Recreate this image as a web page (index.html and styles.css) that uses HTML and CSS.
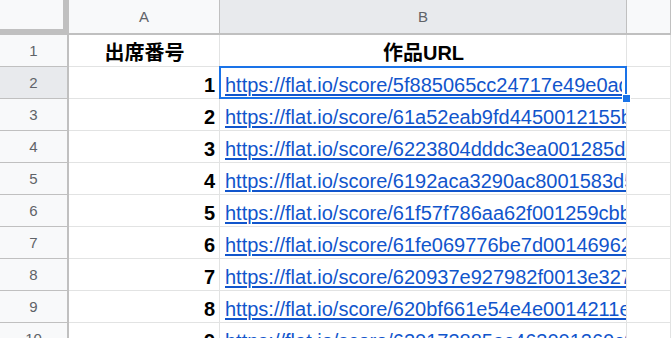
FILE: index.html
```html
<!DOCTYPE html>
<html lang="ja">
<head>
    <meta charset="UTF-8">
    <title>Sheet</title>
    <link rel="stylesheet" href="styles.css">
</head>
<body>

<div class="sheet">
    <div class="row head-row">
        <div class="cell corner"></div>
        <div class="cell col-a col-head">A</div>
        <div class="cell col-b col-head active">B</div>
        <div class="cell col-c col-head"></div>
    </div>

    <div class="row">
        <div class="cell row-head">1</div>
        <div class="cell col-a title">出席番号</div>
        <div class="cell col-b title">作品URL</div>
        <div class="cell col-c"></div>
    </div>
    <div class="row">
        <div class="cell row-head active">2</div>
        <div class="cell col-a num">1</div>
        <div class="cell col-b selected"><a href="#">https://flat.io/score/5f885065cc24717e49e0adf3</a><span class="handle"></span></div>
        <div class="cell col-c"></div>
    </div>
    <div class="row">
        <div class="cell row-head">3</div>
        <div class="cell col-a num">2</div>
        <div class="cell col-b"><a href="#">https://flat.io/score/61a52eab9fd4450012155b9c</a></div>
        <div class="cell col-c"></div>
    </div>
    <div class="row">
        <div class="cell row-head">4</div>
        <div class="cell col-a num">3</div>
        <div class="cell col-b"><a href="#">https://flat.io/score/6223804dddc3ea001285d0a1</a></div>
        <div class="cell col-c"></div>
    </div>
    <div class="row">
        <div class="cell row-head">5</div>
        <div class="cell col-a num">4</div>
        <div class="cell col-b"><a href="#">https://flat.io/score/6192aca3290ac8001583d5e2</a></div>
        <div class="cell col-c"></div>
    </div>
    <div class="row">
        <div class="cell row-head">6</div>
        <div class="cell col-a num">5</div>
        <div class="cell col-b"><a href="#">https://flat.io/score/61f57f786aa62f001259cbb4</a></div>
        <div class="cell col-c"></div>
    </div>
    <div class="row">
        <div class="cell row-head">7</div>
        <div class="cell col-a num">6</div>
        <div class="cell col-b"><a href="#">https://flat.io/score/61fe069776be7d0014696201</a></div>
        <div class="cell col-c"></div>
    </div>
    <div class="row">
        <div class="cell row-head">8</div>
        <div class="cell col-a num">7</div>
        <div class="cell col-b"><a href="#">https://flat.io/score/620937e927982f0013e32755</a></div>
        <div class="cell col-c"></div>
    </div>
    <div class="row">
        <div class="cell row-head">9</div>
        <div class="cell col-a num">8</div>
        <div class="cell col-b"><a href="#">https://flat.io/score/620bf661e54e4e0014211e3d</a></div>
        <div class="cell col-c"></div>
    </div>
    <div class="row">
        <div class="cell row-head">10</div>
        <div class="cell col-a num">9</div>
        <div class="cell col-b"><a href="#">https://flat.io/score/620173885ac463001260c9a7</a></div>
        <div class="cell col-c"></div>
    </div>
</div>

</body>
</html>
```

FILE: styles.css
```css
body {
    margin: 0;
    background: #fff;
    overflow: hidden;
    font-family: "Liberation Sans", Arial, "Noto Sans CJK JP", sans-serif;
}
.sheet {
    width: 100%;
}
.row {
    display: flex;
    height: 32px;
}
.head-row {
    height: 35px;
}
.cell {
    box-sizing: border-box;
    flex: none;
    height: 100%;
    border-right: 1px solid #e2e3e3;
    border-bottom: 1px solid #e2e3e3;
    white-space: nowrap;
    overflow: hidden;
    display: flex;
    align-items: flex-end;
    padding: 0 4px 1px 5px;
    font-size: 20px;
    line-height: 24px;
    color: #000;
}
.col-a {
    width: 151px;
}
.col-b {
    width: 407px;
}
.col-c {
    flex: 1;
    min-width: 0;
}

/* headers */
.corner {
    width: 69px;
    background: #f8f9fa;
    border-right: 6px solid #c0c0c0;
    border-bottom: 6px solid #c0c0c0;
}
.col-head {
    background: #f8f9fa;
    border-right-color: #c0c0c0;
    border-bottom: 2px solid #c0c0c0;
    justify-content: center;
    align-items: center;
    padding: 0;
    font-size: 15px;
    color: #5f6368;
}
.row-head {
    width: 69px;
    background: #f8f9fa;
    border-right: 2px solid #c0c0c0;
    border-bottom-color: #c0c0c0;
    justify-content: center;
    align-items: center;
    padding: 0;
    font-size: 15px;
    color: #5f6368;
}
.active {
    background: #e8eaed;
}

/* body cells */
.title {
    justify-content: center;
    font-weight: bold;
}
.num {
    justify-content: flex-end;
    font-weight: bold;
}
.cell a {
    color: #1155cc;
    text-decoration: underline;
    text-decoration-thickness: 2px;
    text-underline-offset: 2px;
}

.selected {
    position: relative;
    overflow: visible;
}
.selected a {
    display: block;
    overflow: hidden;
    width: 100%;
}
.selected::after {
    content: "";
    position: absolute;
    left: -1px;
    top: -1px;
    right: -1px;
    bottom: -1px;
    border: 2px solid #1a73e8;
}
.handle {
    position: absolute;
    right: -5px;
    bottom: -5px;
    width: 7px;
    height: 7px;
    background: #1a73e8;
    border: 1px solid #fff;
    z-index: 2;
}
```
